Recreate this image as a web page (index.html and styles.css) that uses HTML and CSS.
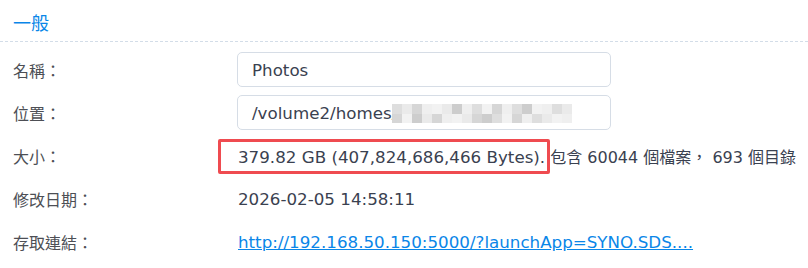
FILE: index.html
```html
<!DOCTYPE html>
<html lang="zh-Hant">
<head>
<meta charset="utf-8">
<title>一般</title>
<link rel="stylesheet" href="styles.css">
</head>
<body>
<div class="panel">
  <div class="section-title">一般</div>
  <div class="form">
    <div class="row">
      <div class="label">名稱：</div>
      <div class="value"><div class="field">Photos</div></div>
    </div>
    <div class="row">
      <div class="label">位置：</div>
      <div class="value"><div class="field">/volume2/homes/<span class="mosaic"><i></i><i></i><i></i><i></i><i></i><i></i><i></i><i></i><i></i><i></i><i></i><i></i><i></i><i></i><i></i><i></i><i></i><i></i><i></i><i></i><i></i><i></i><i></i><i></i><i></i><i></i><i></i><i></i><i></i><i></i><i></i><i></i><i></i><i></i><i></i><i></i></span></div></div>
    </div>
    <div class="row">
      <div class="label">大小：</div>
      <div class="value text"><span class="highlight">379.82 GB (407,824,686,466 Bytes).</span><span class="tail"> 包含 60044 個檔案， 693 個目錄</span></div>
    </div>
    <div class="row">
      <div class="label">修改日期：</div>
      <div class="value text">2026-02-05 14:58:11</div>
    </div>
    <div class="row">
      <div class="label">存取連結：</div>
      <div class="value text"><a class="link" href="#">http://192.168.50.150:5000/?launchApp=SYNO.SDS....</a></div>
    </div>
  </div>
</div>
</body>
</html>
```
FILE: styles.css
```css
html, body {
  margin: 0;
  padding: 0;
  background: #ffffff;
}
body {
  font-family: "DejaVu Sans", "Noto Sans CJK TC", sans-serif;
  font-size: 16.7px;
  color: #3a4150;
}
.panel {
  width: 808px;
  height: 268px;
  overflow: hidden;
}
.section-title {
  height: 42px;
  box-sizing: border-box;
  padding: 10px 0 0 13px;
  font-family: "Noto Sans CJK TC", sans-serif;
  font-size: 18px;
  line-height: 24px;
  color: #0a86e8;
  border-bottom: 1px dashed #d3dde8;
}
.form {
  padding-top: 6px;
}
.row {
  display: grid;
  grid-template-columns: 237px 374px;
  height: 43px;
  align-items: center;
}
.label {
  padding-left: 13px;
  font-family: "Noto Sans CJK TC", sans-serif;
  font-size: 16px;
  color: #4d4f55;
}
.value {
  white-space: nowrap;
}
.text {
  padding-left: 1px;
}
.field {
  height: 35px;
  box-sizing: border-box;
  border: 1px solid #d6dde6;
  border-radius: 5px;
  padding-left: 14px;
  display: flex;
  align-items: center;
}
.mosaic {
  display: inline-grid;
  grid-template-columns: repeat(18, 10px);
  grid-template-rows: 10px 9px;
  margin-left: -5px;
  margin-top: 2px;
}
.mosaic i:nth-child(4n+1) { background: #dedede; }
.mosaic i:nth-child(4n+2) { background: #eaeaea; }
.mosaic i:nth-child(4n+3) { background: #d6d6d6; }
.mosaic i:nth-child(4n) { background: #efefef; }
.mosaic i:nth-child(7n) { background: #cdcdcd; }
.mosaic i:nth-child(5n) { background: #f2f2f2; }
.highlight {
  position: relative;
}
.highlight::after {
  content: "";
  position: absolute;
  left: -20px;
  right: -5px;
  top: -8px;
  bottom: -7px;
  border: 3px solid #ef4b50;
  border-radius: 2px;
}
.tail {
  font-size: 16px;
}
.link {
  color: #0a86e8;
  text-decoration: underline;
}
```
